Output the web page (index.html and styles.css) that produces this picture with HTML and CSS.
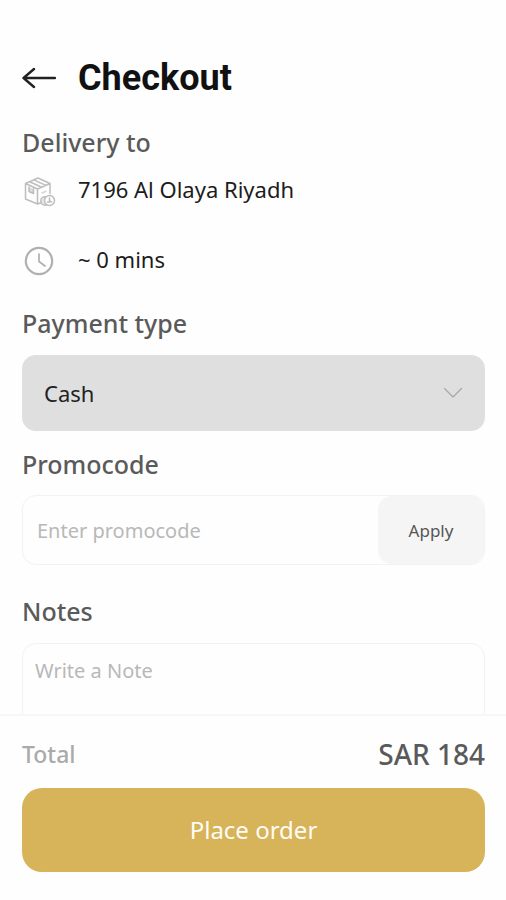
FILE: index.html
```html
<!DOCTYPE html>
<html lang="en">
<head>
<meta charset="utf-8">
<meta name="viewport" content="width=device-width, initial-scale=1">
<title>Checkout</title>
<link rel="stylesheet" href="styles.css">
</head>
<body>
<form class="checkout">
  <main class="content">
    <header class="header">
      <a class="back" href="#" aria-label="Back">
        <svg width="34" height="22" viewBox="0 0 34 22" fill="none" stroke="#222" stroke-width="2.4" stroke-linecap="round" stroke-linejoin="round"><path d="M1.5 11H33M12 2L1.500 11l10.500 9"/></svg>
      </a>
      <h1 class="title">Checkout</h1>
    </header>

    <section class="delivery">
      <h2 class="heading">Delivery to</h2>
      <div class="row row-address">
        <svg class="row-icon" width="34" height="34" viewBox="0 0 34 34" fill="none" stroke="#bdbdbd" stroke-width="1.5" stroke-linejoin="round" stroke-linecap="round">
          <path d="M3.500 10.500L16 5l12 5.500v10M3.500 10.500v15.500L15.500 31l4-1.500M3.500 10.500l12 5.500v15M15.500 16L28 10.500M7.700 8.700l12 5.500M11.800 6.900l12 5.500"/>
          <path d="M7 14v4.500l4.500 2V16" fill="#ddd"/>
          <path d="M20 20l4-1.700" stroke="#d6d6d6"/>
          <circle cx="23" cy="28" r="4.200" fill="#e9e9e9"/>
          <circle cx="27.500" cy="27.500" r="5" fill="#fefefe"/>
          <path d="M27.500 25v3l2 1M25.500 29h2"/>
        </svg>
        <p class="row-text">7196 Al Olaya Riyadh</p>
      </div>
      <div class="row">
        <svg class="row-icon" width="34" height="34" viewBox="0 0 34 34" fill="none" stroke="#b0b0b0" stroke-width="2.200" stroke-linecap="round" stroke-linejoin="round"><circle cx="17" cy="18" r="13.200"/><path d="M17 11v7.500l6 4.500" stroke-width="1.700"/></svg>
        <p class="row-text">~ 0 mins</p>
      </div>
    </section>

    <section class="payment">
      <h2 class="heading"><label for="payment">Payment type</label></h2>
      <div class="select-wrap">
        <select class="select" id="payment"><option>Cash</option></select>
        <svg class="chevron" width="20" height="12" viewBox="0 0 20 12" fill="none" stroke="#a9a9a9" stroke-width="1.300" stroke-linecap="round" stroke-linejoin="round"><path d="M1.500 1.500L10 10l8.500-8.500"/></svg>
      </div>
    </section>

    <section class="promo">
      <h2 class="heading"><label for="promo">Promocode</label></h2>
      <div class="promo-box">
        <input class="promo-input" id="promo" type="text" placeholder="Enter promocode">
        <button class="apply" type="button">Apply</button>
      </div>
    </section>

    <section class="notes">
      <h2 class="heading"><label for="notes">Notes</label></h2>
      <textarea class="notes-input" id="notes" placeholder="Write a Note"></textarea>
    </section>
  </main>

  <footer class="footer">
    <div class="total">
      <span class="total-label">Total</span>
      <strong class="total-value">SAR 184</strong>
    </div>
    <button class="place-order" type="button">Place order</button>
  </footer>
</form>
</body>
</html>
```
FILE: styles.css
```css
* {
  box-sizing: border-box;
}

body {
  margin: 0;
  background: #fefefe;
  color: #1c1c1c;
  font-family: "Noto Sans", "Open Sans", sans-serif;
}

h1, h2, p {
  margin: 0;
}

input, select, textarea, button {
  margin: 0;
  border: 0;
  font-family: inherit;
}

.checkout {
  display: flex;
  flex-direction: column;
  height: 100vh;
}

.content {
  flex: 1;
  min-height: 0;
  overflow: hidden;
  padding: 56px 21px 0 22px;
}

.header {
  display: flex;
  align-items: center;
  gap: 22px;
  height: 44px;
}

.back {
  display: flex;
}

.title {
  color: #111;
  font: bold 36px/44px Roboto, sans-serif;
}

.heading {
  color: #5a5a5a;
  font-size: 25px;
  font-weight: 500;
  line-height: 32px;
}

.delivery {
  margin-top: 26px;
}

.row {
  display: flex;
  gap: 22px;
  margin-top: 36px;
}

.row-address {
  margin-top: 15px;
}

.row-icon {
  flex: none;
}

.row-text {
  font-size: 22px;
  line-height: 32px;
}

.payment {
  margin-top: 30px;
}

.select-wrap {
  position: relative;
  margin-top: 16px;
}

.select {
  display: block;
  width: 100%;
  height: 76px;
  padding: 0 22px;
  border-radius: 14px;
  appearance: none;
  background: #dfdfdf;
  color: #222;
  font-size: 22px;
}

.chevron {
  position: absolute;
  top: 32px;
  right: 22px;
  pointer-events: none;
}

.promo {
  margin-top: 17px;
}

.promo-box {
  display: flex;
  height: 70px;
  margin-top: 15px;
  border: 1px solid #f2f2f2;
  border-radius: 14px;
  overflow: hidden;
}

.promo-input {
  flex: 1;
  min-width: 0;
  padding: 0 14px;
  background: transparent;
  font-size: 20px;
}

.promo-input::placeholder,
.notes-input::placeholder {
  color: #b8b8b8;
}

.apply {
  width: 106px;
  border-radius: 14px;
  background: #f5f5f5;
  color: #555;
  font-size: 17px;
}

.notes {
  margin-top: 30px;
}

.notes-input {
  display: block;
  width: 100%;
  height: 140px;
  margin-top: 16px;
  padding: 12px;
  border: 1px solid #f2f2f2;
  border-radius: 14px;
  resize: none;
  background: transparent;
  font-size: 20px;
  line-height: 30px;
}

.footer {
  padding: 18px 21px 28px 22px;
  border-top: 2px solid #f7f7f7;
}

.total {
  display: flex;
  align-items: center;
  justify-content: space-between;
  line-height: 40px;
}

.total-label {
  color: #aaa;
  font-size: 23px;
  font-weight: 500;
}

.total-value {
  color: #5a5a5a;
  font-size: 28px;
  font-weight: 500;
}

.place-order {
  display: block;
  width: 100%;
  height: 84px;
  margin-top: 14px;
  padding: 0 0 2px;
  border-radius: 20px;
  background: #d7b359;
  color: #fffdf5;
  font-size: 24px;
}
```
